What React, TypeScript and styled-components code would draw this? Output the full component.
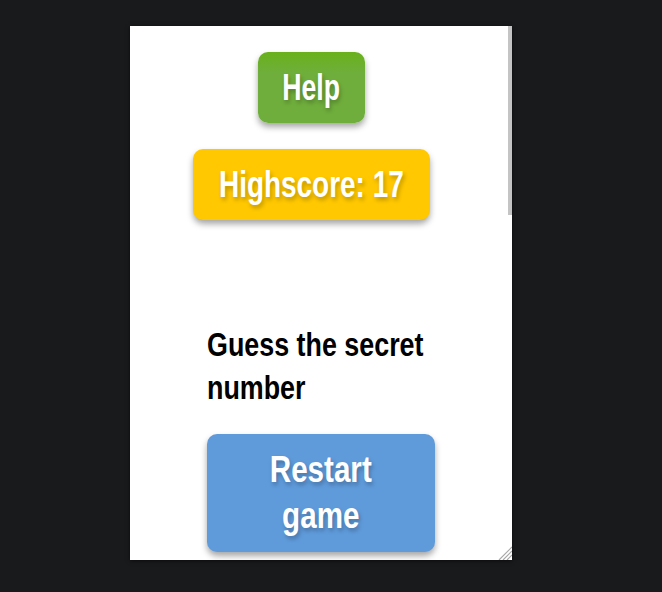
import * as React from 'react';
import styled, {createGlobalStyle} from 'styled-components';

const GlobalStyle = createGlobalStyle`
  html, body {
    margin: 0;
    height: 100%;
    background: #191a1c;
    overflow: hidden;
  }
`;

const Page = styled.div`
  width: 662px;
  height: 592px;
  padding: 26px 0 0 130px;
  box-sizing: border-box;
`;

const Panel = styled.main`
  position: relative;
  width: 382px;
  height: 534px;
  padding-top: 26px;
  box-sizing: border-box;
  background: #fff;
  box-shadow: 0 1px 4px rgba(0, 0, 0, 0.6);
  overflow: hidden;
  font-family: "Liberation Sans", Arial, sans-serif;
  font-weight: 700;
`;

const ScrollThumb = styled.div`
  position: absolute;
  top: 0;
  right: 0;
  width: 4px;
  height: 189px;
  background: #c4c4c4;
`;

const ResizeGrip = styled.svg`
  position: absolute;
  right: 0;
  bottom: 0;
  width: 14px;
  height: 14px;
`;

const TopButtons = styled.div`
  width: 363px;
  display: flex;
  flex-direction: column;
  align-items: center;
  gap: 26px;
`;

const Button = styled.button<{$bg: string; $width: number; $height: number}>`
  appearance: none;
  border: none;
  display: flex;
  align-items: center;
  justify-content: center;
  padding: 0;
  width: ${props => props.$width}px;
  height: ${props => props.$height}px;
  border-radius: 10px;
  background: ${props => props.$bg};
  color: #fff;
  font: inherit;
  font-size: 37px;
  line-height: 46px;
  text-shadow: 2px 3px 5px rgba(0, 0, 0, 0.25);
  box-shadow: 0 4px 6px rgba(0, 0, 0, 0.35);
`;

// the original display face is condensed, none is installed
const Label = styled.span<{$squeeze: number}>`
  flex: none;
  white-space: nowrap;
  transform: scaleX(${props => props.$squeeze});
`;

const GameArea = styled.section`
  width: 228px;
  margin: 103px 0 0 77px;
`;

const Prompt = styled.p`
  width: 288px;
  margin: 0 0 25px;
  color: #000;
  font-size: 34px;
  line-height: 43px;
  transform: scaleX(0.79);
  transform-origin: left top;
`;

export default function App() {
  return (
    <Page>
      <GlobalStyle />
      <Panel>
        <TopButtons>
          <Button $bg="linear-gradient(#69b11a, #6fae3c 30%)" $width={107} $height={71}>
            <Label $squeeze={0.72}>Help</Label>
          </Button>
          <Button $bg="#ffc800" $width={237} $height={71}>
            <Label $squeeze={0.755}>Highscore: 17</Label>
          </Button>
        </TopButtons>
        <GameArea>
          <Prompt>Guess the secret number</Prompt>
          <Button $bg="#5f9bdb" $width={228} $height={118}>
            <Label $squeeze={0.8}>
              Restart
              <br />
              game
            </Label>
          </Button>
        </GameArea>
        <ScrollThumb />
        <ResizeGrip viewBox="0 0 14 14">
          <path d="M1 14L14 1M5 14L14 5M9 14L14 9" stroke="#a8a8a8" strokeWidth="1.2" fill="none" />
        </ResizeGrip>
      </Panel>
    </Page>
  );
}
